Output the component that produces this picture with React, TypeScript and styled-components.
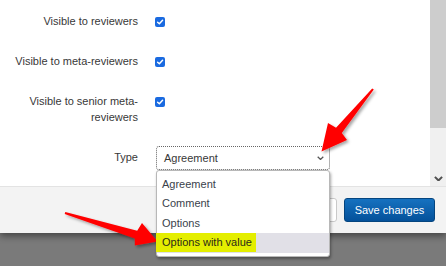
import React from "react";
import styled, { createGlobalStyle } from "styled-components";

const Global = createGlobalStyle`
  html, body { margin: 0; padding: 0; background: #7a7a7a; }
  body { font-family: "Liberation Sans", Arial, sans-serif; }
  * { box-sizing: border-box; }
`;

const Page = styled.div`
  position: relative;
  width: 446px;
  height: 266px;
  overflow: hidden;
  background: #7a7a7a;
`;

const Modal = styled.div`
  background: #fff;
  box-shadow: 0 3px 7px rgba(0, 0, 0, 0.45);
`;

const Body = styled.div`
  display: flex;
  height: 187px;
  border-bottom: 1px solid #e3e3e3;
`;

const Form = styled.div`
  flex: 1;
  display: flex;
  flex-direction: column;
  gap: 18px;
  padding-top: 10px;
`;

const Row = styled.div`
  display: grid;
  grid-template-columns: 138px 1fr;
  column-gap: 17px;
  align-items: start;
`;

const Label = styled.div`
  padding: 3px 0 3px 8px;
  text-align: right;
  font-size: 11px;
  line-height: 16px;
  color: #383838;
`;

const Check = styled.div`
  width: 10px;
  height: 10px;
  margin-top: 7px;
  border-radius: 2px;
  background: #1a6ae0;
  display: flex;
  align-items: center;
  justify-content: center;
`;

const SelectBox = styled.div`
  position: relative;
  margin-left: 1px;
  width: 174px;
  height: 24px;
  border: 1px dotted #666;
  border-radius: 3px;
  display: flex;
  align-items: center;
  justify-content: space-between;
  padding: 0 5px 0 7px;
  font-size: 11px;
  color: #383838;
`;

const OptionList = styled.div`
  position: absolute;
  z-index: 5;
  top: calc(100% + 1px);
  left: -1px;
  width: 174px;
  background: #fff;
  border: 1px solid #b8b8b8;
  border-radius: 3px;
  box-shadow: 1px 2px 3px rgba(0, 0, 0, 0.35);
  padding: 3.5px 0 3.5px;
`;

const OptionItem = styled.div<{ $active?: boolean }>`
  height: 19.5px;
  line-height: 19.5px;
  padding-left: 5px;
  font-size: 11px;
  color: #3a3f4b;
  background: ${(p) => (p.$active ? "#e1e0e7" : "transparent")};
  white-space: nowrap;
`;

const Marker = styled.span`
  display: inline-block;
  height: 19px;
  margin-left: -6px;
  padding: 0 4px 0 6px;
  background: #e4ee00;
  color: #2a2a1a;
`;

const Scrollbar = styled.div`
  width: 16px;
  display: flex;
  flex-direction: column;
`;

const Thumb = styled.div`
  height: 128px;
  background: #cdcdcd;
`;

const Track = styled.div`
  flex: 1;
  background: #f0f0f0;
  display: flex;
  align-items: flex-end;
  justify-content: center;
  padding-bottom: 5px;
`;

const Footer = styled.div`
  height: 46px;
  background: #f3f3f3;
  display: flex;
  align-items: center;
  justify-content: flex-end;
  gap: 7px;
  padding-right: 11px;
`;

const Button = styled.div<{ $primary?: boolean }>`
  height: 24px;
  padding: 0 8px;
  display: flex;
  align-items: center;
  justify-content: center;
  border-radius: 3px;
  font-size: 11px;
  white-space: nowrap;
  border: 1px solid ${(p) => (p.$primary ? "#05457f" : "#c9c9c9")};
  color: ${(p) => (p.$primary ? "#fff" : "#333")};
  background: ${(p) =>
    p.$primary ? "linear-gradient(#1672c0, #04519a)" : "#fff"};
  width: ${(p) => (p.$primary ? "91px" : "56px")};
`;

const Overlay = styled.svg`
  position: absolute;
  left: 0;
  top: 0;
  pointer-events: none;
`;

const Chevron = ({ size = 7, color = "#555", w = 1.3 }: { size?: number; color?: string; w?: number }) => (
  <svg width={size} height={size * 0.6} viewBox="0 0 10 6">
    <polyline points="1,1 5,5 9,1" fill="none" stroke={color} strokeWidth={w * 1.4} />
  </svg>
);

const CheckMark = () => (
  <svg width="8" height="8" viewBox="0 0 10 10">
    <polyline points="2,5.2 4.2,7.3 8.2,2.8" fill="none" stroke="#fff" strokeWidth="1.8" strokeLinecap="round" strokeLinejoin="round" />
  </svg>
);

const rows = ["Visible to reviewers", "Visible to meta-reviewers", "Visible to senior meta-reviewers"];
const options = ["Agreement", "Comment", "Options", "Options with value"];

export default function App() {
  return (
    <Page>
      <Global />
      <Modal>
        <Body>
          <Form>
            {rows.map((r) => (
              <Row key={r}>
                <Label>{r}</Label>
                <Check>
                  <CheckMark />
                </Check>
              </Row>
            ))}
            <Row>
              <Label>Type</Label>
              <SelectBox>
                <span>Agreement</span>
                <Chevron />
                <OptionList>
                  {options.map((o, i) =>
                    i === 3 ? (
                      <OptionItem key={o} $active>
                        <Marker>{o}</Marker>
                      </OptionItem>
                    ) : (
                      <OptionItem key={o}>{o}</OptionItem>
                    )
                  )}
                </OptionList>
              </SelectBox>
            </Row>
          </Form>
          <Scrollbar>
            <Thumb />
            <Track>
              <Chevron size={9} color="#505050" w={1.6} />
            </Track>
          </Scrollbar>
        </Body>
        <Footer>
          <Button>Close</Button>
          <Button $primary>Save changes</Button>
        </Footer>
      </Modal>
      <Overlay width="446" height="266" viewBox="0 0 446 266">
        <defs>
          <filter id="sh" x="-20%" y="-20%" width="140%" height="140%">
            <feDropShadow dx="2" dy="2" stdDeviation="1.5" floodColor="#000" floodOpacity="0.35" />
          </filter>
        </defs>
        <polygon
          filter="url(#sh)"
          fill="#ff0000"
          points="373.8,89.6 341.8,133 347,140 321.5,151.5 328,123 336,127.8 372.2,88.4"
        />
        <polygon
          filter="url(#sh)"
          fill="#ff0000"
          points="64.7,214 134.8,238.5 134.8,245.5 157.5,241.5 142,223 137.2,230.8 65.3,212"
        />
      </Overlay>
    </Page>
  );
}
